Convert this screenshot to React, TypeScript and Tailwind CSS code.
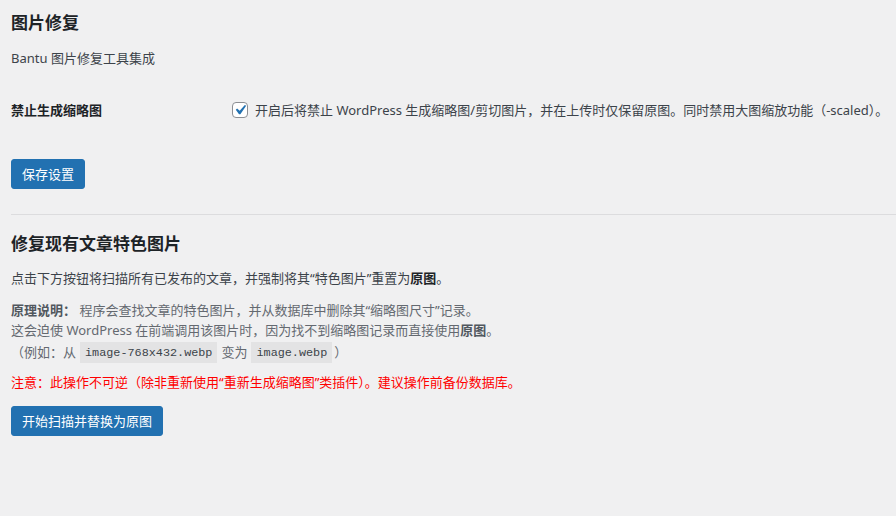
import React from "react";

const font = { fontFamily: '"Noto Sans", "Noto Sans CJK SC", sans-serif' };

export default function App() {
  return (
    <div
      className="min-h-[516px] w-[896px] overflow-hidden bg-[#f0f0f1] pl-[11px] text-[13px] text-[#3c434a]"
      style={font}
    >
      <h1 className="pt-[11px] text-[17px] font-semibold leading-[24px] text-[#1d2327]">图片修复</h1>
      <p className="mt-[13px] leading-[20px]">Bantu 图片修复工具集成</p>

      <div className="mt-[32px] flex h-[20px] items-center">
        <div className="w-[221px] text-[13px] font-semibold leading-[20px] text-[#1d2327]">禁止生成缩略图</div>
        <div className="flex items-center">
          <span className="flex h-[16px] w-[16px] items-center justify-center overflow-visible rounded-[4px] border border-[#8c8f94] bg-white">
            <svg width="20" height="20" viewBox="0 0 20 20" className="-m-[3px] shrink-0">
              <path d="M14.83 4.89l1.34.94-5.81 8.38H9.02L5.78 9.67l1.34-1.25 2.57 2.4z" fill="#2271b1" />
            </svg>
          </span>
          <span className="ml-[7px] leading-[20px] whitespace-nowrap">
            开启后将禁止 WordPress 生成缩略图/剪切图片，并在上传时仅保留原图。同时禁用大图缩放功能（-scaled）。
          </span>
        </div>
      </div>

      <button className="mt-[39px] flex h-[30px] items-center rounded-[3px] border border-[#2271b1] bg-[#2271b1] px-[10px] text-[13px] leading-[20px] text-white">
        保存设置
      </button>

      <div className="mt-[25px] h-px bg-[#dcdcde]" />

      <h2 className="mt-[17px] text-[17px] font-semibold leading-[24px] text-[#1d2327]">修复现有文章特色图片</h2>
      <p className="mt-[12px] leading-[20px]">
        点击下方按钮将扫描所有已发布的文章，并强制将其“特色图片”重置为<strong className="font-semibold text-[#1d2327]">原图</strong>。
      </p>

      <div className="mt-[13px] text-[#646970]">
        <div className="leading-[19.5px]">
          <strong className="font-semibold text-[#50575e]">原理说明：</strong> 程序会查找文章的特色图片，并从数据库中删除其“缩略图尺寸”记录。
        </div>
        <div className="leading-[19.5px]">
          这会迫使 WordPress 在前端调用该图片时，因为找不到缩略图记录而直接使用<strong className="font-semibold text-[#50575e]">原图</strong>。
        </div>
        <div className="mt-[2px] flex h-[20px] items-center leading-[20px]">
          <span>（例如：从</span>
          <code
            className="ml-[4px] bg-[#e3e3e4] px-[5px] pt-[3px] pb-[2px] text-[11.8px] leading-[16px] text-[#3c434a]"
            style={{ fontFamily: '"Liberation Mono", monospace' }}
          >
            image-768x432.webp
          </code>
          <span className="ml-[4px]">变为</span>
          <code
            className="ml-[4px] bg-[#e3e3e4] px-[5px] pt-[3px] pb-[2px] text-[11.8px] leading-[16px] text-[#3c434a]"
            style={{ fontFamily: '"Liberation Mono", monospace' }}
          >
            image.webp
          </code>
          <span className="ml-[2px]">）</span>
        </div>
      </div>

      <p className="mt-[10px] leading-[20px] text-[#ff0000]">
        注意：此操作不可逆（除非重新使用“重新生成缩略图”类插件）。建议操作前备份数据库。
      </p>

      <button className="mt-[14px] flex h-[30px] items-center rounded-[3px] border border-[#2271b1] bg-[#2271b1] px-[10px] text-[13px] leading-[20px] text-white">
        开始扫描并替换为原图
      </button>
    </div>
  );
}
